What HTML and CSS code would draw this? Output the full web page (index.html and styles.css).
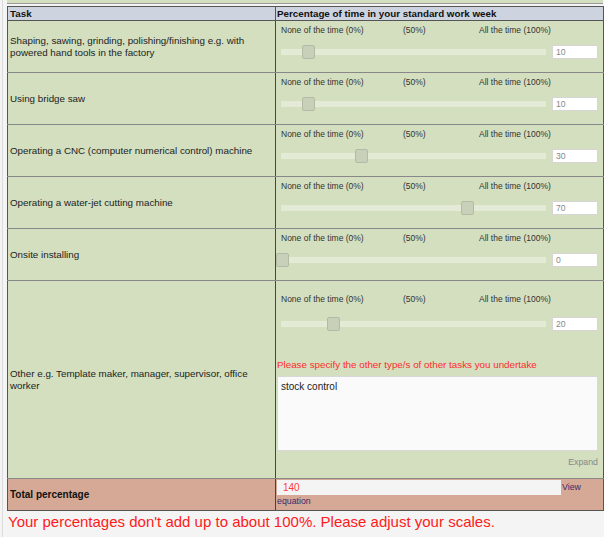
FILE: index.html
```html
<!DOCTYPE html>
<html>
<head>
<meta charset="utf-8">
<link rel="stylesheet" href="styles.css">
</head>
<body>
<div class="page">
  <div class="prev"></div>
  <table class="grid">
    <colgroup><col class="c1"><col class="c2"></colgroup>
    <thead>
      <tr class="head"><th>Task</th><th>Percentage of time in your standard work week</th></tr>
    </thead>
    <tbody>
      <tr class="row">
        <td class="task">Shaping, sawing, grinding, polishing/finishing e.g. with powered hand tools in the factory</td>
        <td class="scale">
          <div class="labels"><span class="l0">None of the time (0%)</span><span class="l50">(50%)</span><span>All the time (100%)</span></div>
          <div class="sline"><div class="track"><div class="thumb" style="left:21px"></div></div><div class="val">10</div></div>
        </td>
      </tr>
      <tr class="row">
        <td class="task">Using bridge saw</td>
        <td class="scale">
          <div class="labels"><span class="l0">None of the time (0%)</span><span class="l50">(50%)</span><span>All the time (100%)</span></div>
          <div class="sline"><div class="track"><div class="thumb" style="left:21px"></div></div><div class="val">10</div></div>
        </td>
      </tr>
      <tr class="row">
        <td class="task">Operating a CNC (computer numerical control) machine</td>
        <td class="scale">
          <div class="labels"><span class="l0">None of the time (0%)</span><span class="l50">(50%)</span><span>All the time (100%)</span></div>
          <div class="sline"><div class="track"><div class="thumb" style="left:74px"></div></div><div class="val">30</div></div>
        </td>
      </tr>
      <tr class="row">
        <td class="task">Operating a water-jet cutting machine</td>
        <td class="scale">
          <div class="labels"><span class="l0">None of the time (0%)</span><span class="l50">(50%)</span><span>All the time (100%)</span></div>
          <div class="sline"><div class="track"><div class="thumb" style="left:180px"></div></div><div class="val">70</div></div>
        </td>
      </tr>
      <tr class="row">
        <td class="task">Onsite installing</td>
        <td class="scale">
          <div class="labels"><span class="l0">None of the time (0%)</span><span class="l50">(50%)</span><span>All the time (100%)</span></div>
          <div class="sline"><div class="track"><div class="thumb" style="left:-5px"></div></div><div class="val">0</div></div>
        </td>
      </tr>
      <tr class="row other">
        <td class="task">Other e.g. Template maker, manager, supervisor, office worker</td>
        <td class="scale">
          <div class="labels"><span class="l0">None of the time (0%)</span><span class="l50">(50%)</span><span>All the time (100%)</span></div>
          <div class="sline"><div class="track"><div class="thumb" style="left:46px"></div></div><div class="val">20</div></div>
          <div class="specify">Please specify the other type/s of other tasks you undertake</div>
          <div class="textbox">stock control</div>
          <div class="expand">Expand</div>
        </td>
      </tr>
      <tr class="total">
        <td class="task bold">Total percentage</td>
        <td class="totcell">
          <div class="totline"><span class="totbox">140</span><a class="view">View</a></div>
          <a class="view eq">equation</a>
        </td>
      </tr>
    </tbody>
  </table>
  <div class="error">Your percentages don't add up to about 100%. Please adjust your scales.</div>
</div>
</body>
</html>
```

FILE: styles.css
```css
html, body {
  margin: 0;
  padding: 0;
}
body {
  background: #f4f4f4;
  font-family: "Liberation Sans", Arial, sans-serif;
  color: #222;
  width: 604px;
  height: 537px;
  overflow: hidden;
}
.page {
  margin-left: 2px;
  border-left: 1px solid #dcdcdc;
  padding-left: 4px;
  height: 537px;
  box-sizing: border-box;
}
.prev {
  width: 596px;
  height: 3px;
  background: #d3dfbf;
  border-bottom: 1px solid #9a9a9a;
  margin-bottom: 2px;
}
.grid {
  border-collapse: collapse;
  width: 596px;
  table-layout: fixed;
  border: 1px solid #555;
}
.c1 { width: 268px; }
.c2 { width: 328px; }
.head th {
  background: #cdd3df;
  font-size: 9.8px;
  font-weight: bold;
  text-align: left;
  height: 13px;
  padding: 0 2px;
  line-height: 13px;
  border: 1px solid #555;
  color: #111;
}
.head th + th { padding-left: 1px; }
.row td {
  background: #d3dfbf;
  border-top: 1px solid #888;
  border-bottom: 1px solid #888;
  height: 51px;
  padding: 0;
  vertical-align: top;
}
.row td.task,
.total td.task {
  border-right: 1px solid #444;
  vertical-align: middle;
  font-size: 9.8px;
  line-height: 12px;
  padding: 0 2px;
  color: #222;
}
.scale {
  padding: 0 0 0 5px !important;
}
.labels {
  display: flex;
  font-size: 8.5px;
  color: #333;
  line-height: 11px;
  margin-top: 4px;
}
.l0 { width: 122px; }
.l50 { width: 76px; }
.sline {
  display: flex;
  align-items: center;
  margin-top: 9px;
  height: 14px;
}
.track {
  position: relative;
  width: 265px;
  height: 6px;
  background: #e3ebd6;
  border-radius: 1px;
}
.thumb {
  position: absolute;
  top: -4px;
  width: 11px;
  height: 12px;
  background: #c8d0b9;
  border: 1px solid #b3bba4;
  border-radius: 2px;
}
.val {
  margin-left: 6px;
  width: 41px;
  height: 12px;
  background: #fff;
  border: 1px solid #d6d6d6;
  font-size: 8.6px;
  line-height: 12px;
  color: #888;
  padding-left: 3px;
}
.row.other td { height: 197px; }
.other .labels { margin-top: 13px; }
.other .sline { margin-top: 12px; }
.specify {
  margin-left: -4px;
  margin-top: 28px;
  font-size: 9.8px;
  line-height: 12px;
  color: #ff2b2b;
}
.textbox {
  margin-left: -4px;
  margin-top: 5px;
  width: 313px;
  height: 67px;
  background: #fafafa;
  border: 1px solid #d8d8d8;
  font-size: 10px;
  line-height: 12px;
  color: #222;
  padding: 4px 3px 2px;
}
.expand {
  text-align: right;
  font-size: 8.8px;
  line-height: 12px;
  color: #888;
  margin-top: 5px;
  padding-right: 5px;
}
.total td {
  background: #d5a995;
  height: 30px;
  border-top: 1px solid #888;
  border-bottom: 1px solid #555;
  padding: 0;
}
.total td.bold {
  font-weight: bold;
  font-size: 10px;
  color: #111;
}
.totcell {
  vertical-align: top;
  padding: 1px 0 0 1px !important;
  font-size: 8.8px;
  line-height: 12px;
}
.totline {
  display: flex;
  align-items: flex-start;
}
.totbox {
  width: 278px;
  height: 15px;
  background: #f4f4f4;
  color: #ff3a3a;
  font-size: 10px;
  line-height: 15px;
  padding-left: 6px;
  margin-right: 1px;
}
.view {
  color: #3b2a6c;
  font-size: 8.8px;
  line-height: 14px;
}
.eq {
  display: block;
  line-height: 12px;
}
.error {
  margin-top: 2px;
  margin-left: 1px;
  font-size: 15px;
  line-height: 18px;
  color: #ff1a1a;
}
```
